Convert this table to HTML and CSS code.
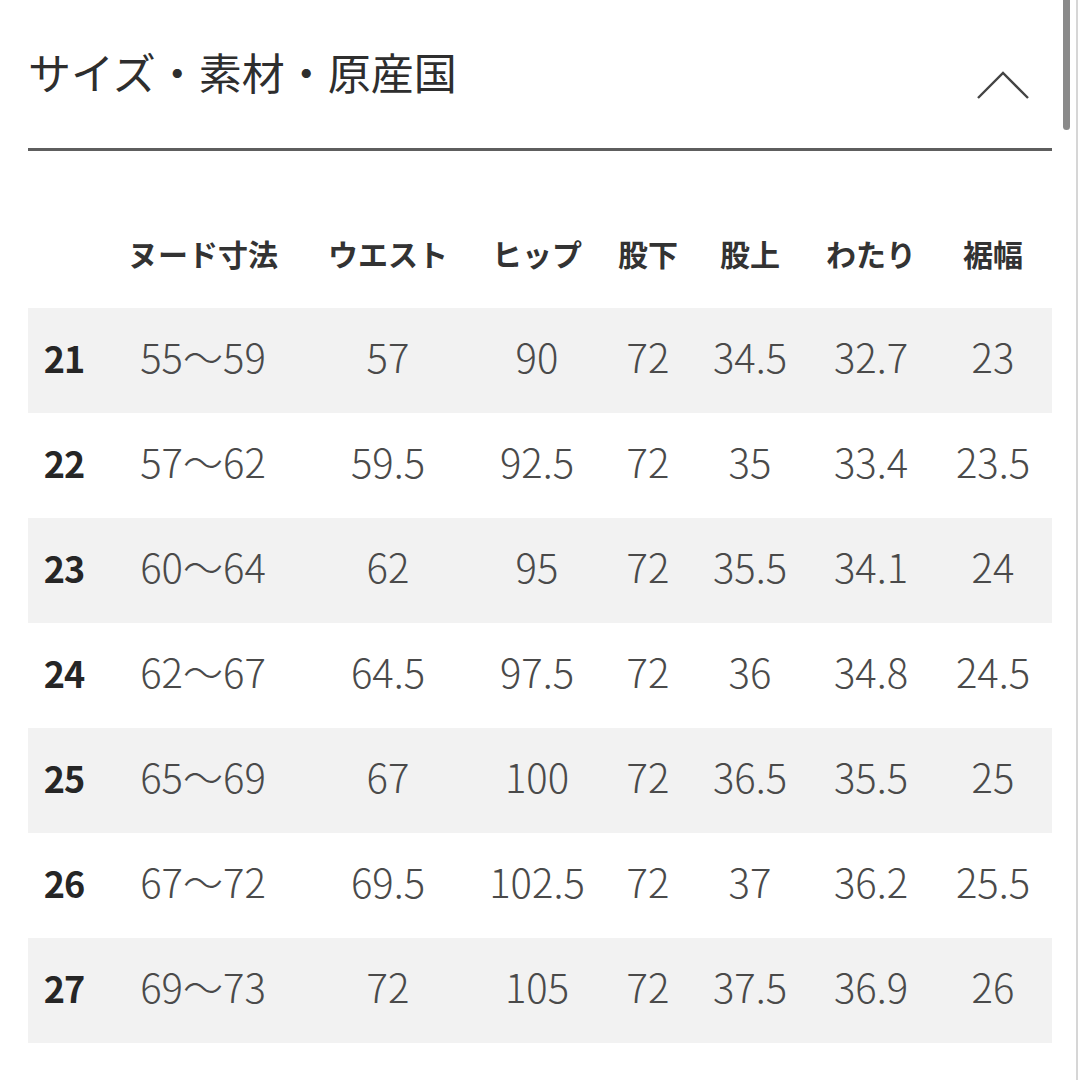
FILE: index.html
```html
<!DOCTYPE html>
<html lang="ja">
<head>
<meta charset="utf-8">
<title>サイズ・素材・原産国</title>
<link rel="stylesheet" href="styles.css">
</head>
<body>
<div class="page">
  <div class="section-head">
    <h2 class="title">サイズ・素材・原産国</h2>
    <svg class="chevron" width="56" height="32" viewBox="0 0 56 32" aria-hidden="true">
      <polyline points="2,28 27,3 52,28" fill="none" stroke="#444" stroke-width="2.4" stroke-linejoin="miter"/>
    </svg>
  </div>

  <div class="size-table">
    <div class="row head">
      <div class="cell"></div>
      <div class="cell">ヌード寸法</div>
      <div class="cell">ウエスト</div>
      <div class="cell">ヒップ</div>
      <div class="cell">股下</div>
      <div class="cell">股上</div>
      <div class="cell">わたり</div>
      <div class="cell">裾幅</div>
    </div>
    <div class="row shade">
      <div class="cell size">21</div><div class="cell">55〜59</div><div class="cell">57</div><div class="cell">90</div><div class="cell">72</div><div class="cell">34.5</div><div class="cell">32.7</div><div class="cell">23</div>
    </div>
    <div class="row">
      <div class="cell size">22</div><div class="cell">57〜62</div><div class="cell">59.5</div><div class="cell">92.5</div><div class="cell">72</div><div class="cell">35</div><div class="cell">33.4</div><div class="cell">23.5</div>
    </div>
    <div class="row shade">
      <div class="cell size">23</div><div class="cell">60〜64</div><div class="cell">62</div><div class="cell">95</div><div class="cell">72</div><div class="cell">35.5</div><div class="cell">34.1</div><div class="cell">24</div>
    </div>
    <div class="row">
      <div class="cell size">24</div><div class="cell">62〜67</div><div class="cell">64.5</div><div class="cell">97.5</div><div class="cell">72</div><div class="cell">36</div><div class="cell">34.8</div><div class="cell">24.5</div>
    </div>
    <div class="row shade">
      <div class="cell size">25</div><div class="cell">65〜69</div><div class="cell">67</div><div class="cell">100</div><div class="cell">72</div><div class="cell">36.5</div><div class="cell">35.5</div><div class="cell">25</div>
    </div>
    <div class="row">
      <div class="cell size">26</div><div class="cell">67〜72</div><div class="cell">69.5</div><div class="cell">102.5</div><div class="cell">72</div><div class="cell">37</div><div class="cell">36.2</div><div class="cell">25.5</div>
    </div>
    <div class="row shade">
      <div class="cell size">27</div><div class="cell">69〜73</div><div class="cell">72</div><div class="cell">105</div><div class="cell">72</div><div class="cell">37.5</div><div class="cell">36.9</div><div class="cell">26</div>
    </div>
  </div>
</div>
<div class="scroll-track"></div>
<div class="scroll-thumb"></div>
</body>
</html>
```

FILE: styles.css
```css
html, body {
  margin: 0;
  padding: 0;
  background: #ffffff;
}

body {
  width: 1080px;
  height: 1080px;
  overflow: hidden;
  position: relative;
  font-family: "Noto Sans CJK JP", "Noto Sans", sans-serif;
  color: #333;
}

.page {
  padding: 0 28px;
}

.section-head {
  display: flex;
  justify-content: space-between;
  align-items: flex-start;
  padding-top: 50px;
  height: 98px;
  border-bottom: 3px solid #5e5e5e;
}

.title {
  margin: 0;
  font-size: 43px;
  line-height: 43px;
  font-weight: 400;
  color: #2e2e2e;
  letter-spacing: 0;
}

.chevron {
  margin-top: 20px;
  margin-right: 20px;
}

.size-table {
  margin-top: 52px;
}

.row {
  display: grid;
  grid-template-columns: 72px 206px 164px 134px 88px 116px 126px 118px;
  height: 105px;
  align-items: center;
}

.row.shade {
  background: #f2f2f2;
}

.cell {
  text-align: center;
  font-size: 40px;
  font-weight: 300;
  color: #4a4a4a;
  white-space: nowrap;
  padding-bottom: 9px;
}

.row.head .cell {
  font-size: 30px;
  font-weight: 700;
  color: #333;
  padding-bottom: 6px;
}

.cell.size {
  font-size: 36px;
  font-weight: 700;
  color: #262626;
  letter-spacing: -1px;
  padding-bottom: 7px;
}

.scroll-track {
  position: absolute;
  top: 0;
  left: 1076px;
  width: 2px;
  height: 1080px;
  background: #d6d6d6;
}

.scroll-thumb {
  position: absolute;
  top: -6px;
  left: 1063px;
  width: 7px;
  height: 136px;
  border-radius: 4px;
  background: #8a8a8a;
}
```
